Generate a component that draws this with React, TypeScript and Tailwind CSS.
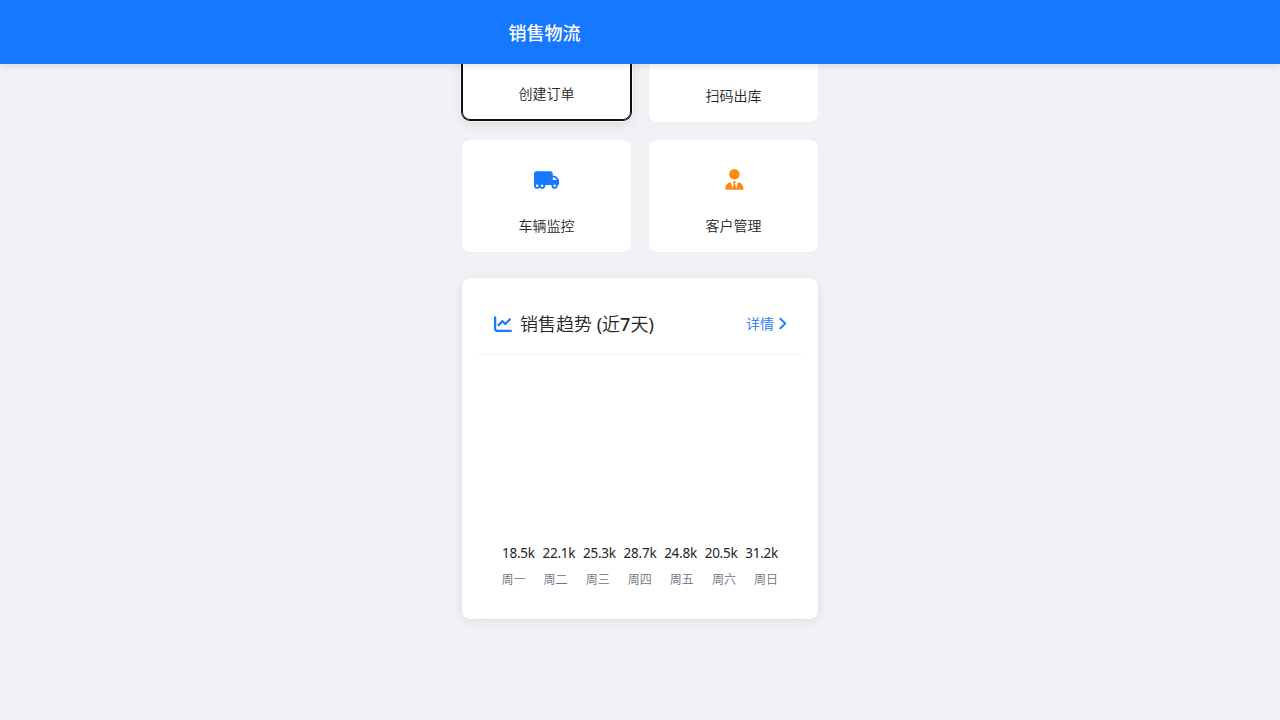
import type { ReactNode } from 'react';
import { FaChartLine, FaChevronRight, FaFileCirclePlus, FaQrcode, FaTruckMoving, FaUserTie } from 'react-icons/fa6';

const trend = [
  { day: '周一', value: '18.5k' },
  { day: '周二', value: '22.1k' },
  { day: '周三', value: '25.3k' },
  { day: '周四', value: '28.7k' },
  { day: '周五', value: '24.8k' },
  { day: '周六', value: '20.5k' },
  { day: '周日', value: '31.2k' },
];

function ActionCard({ icon, label, active = false }: { icon: ReactNode; label: string; active?: boolean }) {
  return (
    <button
      className={`flex h-28 flex-col items-center rounded-lg bg-white pt-[29px] text-[14px] leading-[22px] text-[#262626] ${
        active
          ? '-translate-y-0.5 shadow-[0_0_0_1px_#101010,inset_0_0_0_1px_#101010,0_0_0_2px_rgba(255,255,255,0.7),0_4px_12px_rgba(0,0,0,0.1)]'
          : 'shadow-[0_1px_2px_rgba(0,0,0,0.02)]'
      }`}
    >
      <span className="flex h-[21px] items-center text-[20.8px]">{icon}</span>
      <span className="mt-[25px] font-[350]">{label}</span>
    </button>
  );
}

export default function App() {
  return (
    <div className="flex h-screen flex-col overflow-hidden bg-[#f0f2f5] font-['Noto_Sans','Noto_Sans_CJK_SC',sans-serif] text-[#262626]">
      <header className="z-10 flex h-16 shrink-0 items-center justify-center bg-[#1677ff] shadow-[0_2px_8px_rgba(0,0,0,0.1)]">
        <div className="w-[263px]">
          <h1 className="pt-px text-[18px] font-medium leading-7 text-white">销售物流</h1>
        </div>
      </header>
      <main className="mx-auto -mt-[54px] w-[356px]">
        <section className="grid grid-cols-2 gap-[18px]">
          <ActionCard active icon={<FaFileCirclePlus className="text-[#1677ff]" />} label="创建订单" />
          <ActionCard icon={<FaQrcode className="text-[#52c41a]" />} label="扫码出库" />
          <ActionCard icon={<FaTruckMoving className="h-5 w-[25px] text-[#1677ff]" />} label="车辆监控" />
          <ActionCard icon={<FaUserTie className="ml-px text-[#fa8c16]" />} label="客户管理" />
        </section>
        <section className="mt-[26px] h-[341px] rounded-lg bg-white p-4 shadow-[0_0_0_1px_rgba(0,0,0,0.02),0_2px_12px_rgba(0,0,0,0.08)]">
          <div className="flex h-[61px] items-center justify-between border-b border-[#f5f5f5] px-4">
            <h2 className="flex items-center gap-2 text-[18px] leading-7">
              <FaChartLine className="text-[#1677ff]" />
              <span className="font-[350]"><span>销售趋势 </span><span className="font-normal">(</span>近<span className="font-medium">7</span>天<span className="font-normal">)</span></span>
            </h2>
            <a className="flex items-center gap-1 text-[14px] font-[350] leading-[22px] text-[#1677ff]">
              详情
              <FaChevronRight className="-mt-px h-[13px] w-2 stroke-current stroke-[20]" />
            </a>
          </div>
          <div className="flex h-[216px] items-end justify-between px-6 pb-2">
            {trend.map(({ day, value }) => (
              <span key={day} className="text-[13.5px] leading-5 tracking-[-0.25px]">{value}</span>
            ))}
          </div>
          <div className="-mt-px flex justify-between pl-[23.5px] pr-6 text-[12px] font-[350] leading-5 text-[#6b7280]">
            {trend.map(({ day }) => (
              <span key={day}>{day}</span>
            ))}
          </div>
        </section>
      </main>
    </div>
  );
}
